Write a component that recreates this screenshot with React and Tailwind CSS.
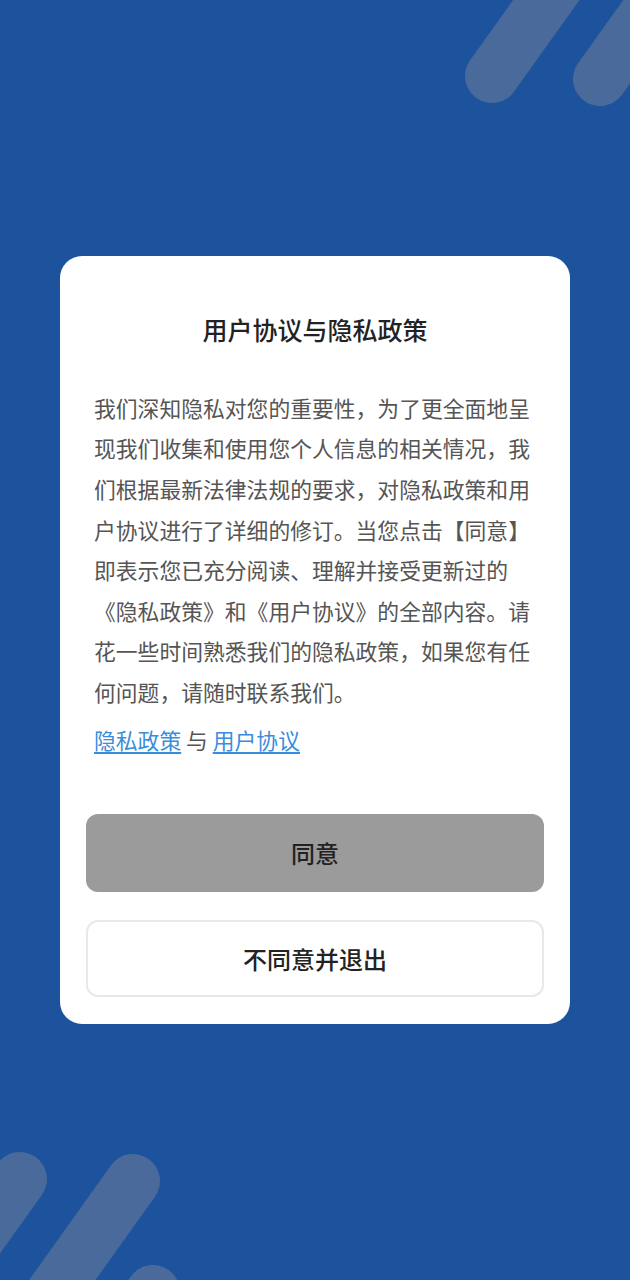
import React from 'react';

const font = { fontFamily: '"Noto Sans CJK SC", "Noto Sans", sans-serif' };

function Stripes() {
    // decorative capsules in the corners
    return (
        <svg className="absolute inset-0 w-full h-full pointer-events-none" viewBox="0 0 630 1280" preserveAspectRatio="none">
            <g stroke="#4a6a9b" strokeWidth="54" strokeLinecap="round" fill="none">
                <line x1="492" y1="76" x2="600" y2="-75" />
                <line x1="600" y1="79" x2="708" y2="-72" />
                <line x1="20" y1="1179" x2="-90" y2="1333" />
                <line x1="133" y1="1181" x2="23" y2="1335" />
                <line x1="153" y1="1292" x2="43" y2="1446" />
            </g>
        </svg>
    );
}

export default function App() {
    return (
        <div className="relative min-h-[1280px] w-full bg-[#1c539c] overflow-hidden flex items-center justify-center" style={font}>
            <Stripes />
            <div className="relative w-[510px] bg-white rounded-[22px] pt-[56px] pb-[27px] px-[26px] flex flex-col">
                <h1 className="text-center text-[25px] leading-[34px] font-medium text-[#222]">用户协议与隐私政策</h1>
                <div className="px-[8px] mt-[42px]">
                    <p className="text-[21.8px] leading-[40.6px] text-[#555]">
                        我们深知隐私对您的重要性，为了更全面地呈现我们收集和使用您个人信息的相关情况，我们根据最新法律法规的要求，对隐私政策和用户协议进行了详细的修订。当您点击【同意】即表示您已充分阅读、理解并接受更新过的《隐私政策》和《用户协议》的全部内容。请花一些时间熟悉我们的隐私政策，如果您有任何问题，请随时联系我们。
                    </p>
                    <p className="mt-[7px] text-[21.8px] leading-[40.6px] text-[#555]">
                        <a className="text-[#3a8ddc] underline underline-offset-[3px]" href="#">隐私政策</a>
                        <span> 与 </span>
                        <a className="text-[#3a8ddc] underline underline-offset-[3px]" href="#">用户协议</a>
                    </p>
                </div>
                <button type="button" className="mt-[54px] h-[78px] w-full rounded-[12px] bg-[#9b9b9b] text-[24px] font-medium text-[#222]">同意</button>
                <button type="button" className="mt-[28px] h-[77px] w-full rounded-[12px] border-2 border-[#e8e8e8] bg-white text-[24px] font-medium text-[#222]">不同意并退出</button>
            </div>
        </div>
    );
}
